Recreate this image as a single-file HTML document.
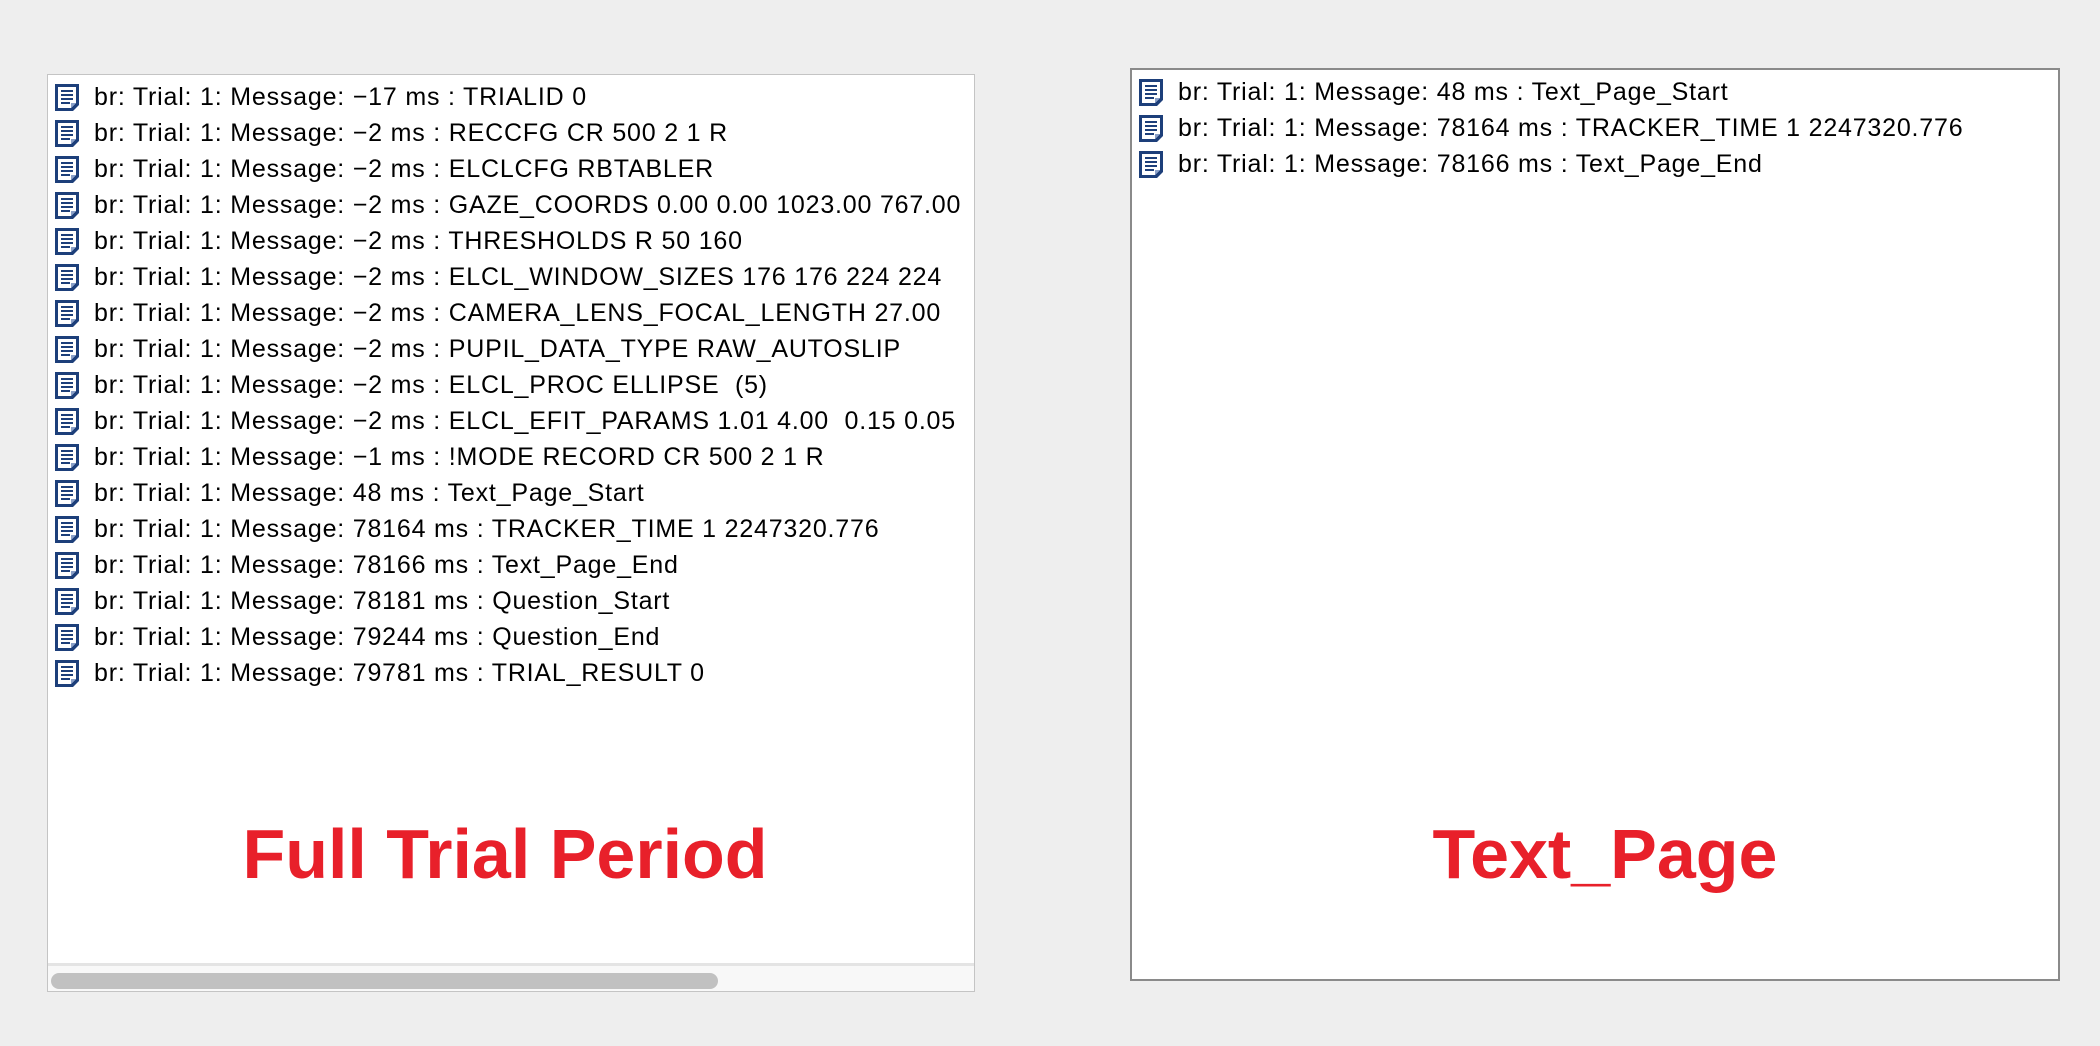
<!DOCTYPE html>
<html><head><meta charset="utf-8"><style>
body{margin:0;width:2100px;height:1046px;background:#eeeeee;position:relative;overflow:hidden;font-family:"Liberation Sans",sans-serif}
.panel{position:absolute;background:#fff;overflow:hidden}
#p1{left:47px;top:74px;width:926px;height:916px;border:1px solid #c4c4c4}
#p2{left:1130px;top:68px;width:926px;height:909px;border:2px solid #8a8a8a}
.row{position:absolute;left:6px;height:36px;white-space:nowrap;font-size:25px;letter-spacing:0.8px;line-height:36px;color:#000}
.row svg{position:absolute;left:0;top:4px}
.row span{position:absolute;left:40px;top:0}
.lbl{position:absolute;color:#e8202a;font-weight:bold;font-size:70px;transform:translateX(-50%);white-space:nowrap;top:814px}
.track{position:absolute;left:0;right:0;top:888px;height:28px;background:#f8f8f8;border-top:3px solid #e4e4e4}
.thumb{position:absolute;left:3px;top:7px;width:667px;height:16px;border-radius:8px;background:#c1c1c1}
</style></head><body>
<svg width="0" height="0" style="position:absolute"><defs><g id="ic"><path d="M1 1H25V22L19 28H1Z" fill="#1d3f7a"/><path d="M4 4H22V20L17 25H4Z" fill="#fff"/><path d="M7 8H19M7 12H19M7 16H19M7 20H16" stroke="#1d3f7a" stroke-width="2"/><path d="M17 25L22 20H17Z" fill="#8aa0c8"/></g></defs></svg>
<div class="panel" id="p1">
<div class="row" style="top:4px"><svg width="27" height="29"><use href="#ic"/></svg><span>br: Trial: 1: Message: −17 ms : TRIALID 0</span></div>
<div class="row" style="top:40px"><svg width="27" height="29"><use href="#ic"/></svg><span>br: Trial: 1: Message: −2 ms : RECCFG CR 500 2 1 R</span></div>
<div class="row" style="top:76px"><svg width="27" height="29"><use href="#ic"/></svg><span>br: Trial: 1: Message: −2 ms : ELCLCFG RBTABLER</span></div>
<div class="row" style="top:112px"><svg width="27" height="29"><use href="#ic"/></svg><span>br: Trial: 1: Message: −2 ms : GAZE_COORDS 0.00 0.00 1023.00 767.00</span></div>
<div class="row" style="top:148px"><svg width="27" height="29"><use href="#ic"/></svg><span>br: Trial: 1: Message: −2 ms : THRESHOLDS R 50 160</span></div>
<div class="row" style="top:184px"><svg width="27" height="29"><use href="#ic"/></svg><span>br: Trial: 1: Message: −2 ms : ELCL_WINDOW_SIZES 176 176 224 224</span></div>
<div class="row" style="top:220px"><svg width="27" height="29"><use href="#ic"/></svg><span>br: Trial: 1: Message: −2 ms : CAMERA_LENS_FOCAL_LENGTH 27.00</span></div>
<div class="row" style="top:256px"><svg width="27" height="29"><use href="#ic"/></svg><span>br: Trial: 1: Message: −2 ms : PUPIL_DATA_TYPE RAW_AUTOSLIP</span></div>
<div class="row" style="top:292px"><svg width="27" height="29"><use href="#ic"/></svg><span>br: Trial: 1: Message: −2 ms : ELCL_PROC ELLIPSE &nbsp;(5)</span></div>
<div class="row" style="top:328px"><svg width="27" height="29"><use href="#ic"/></svg><span>br: Trial: 1: Message: −2 ms : ELCL_EFIT_PARAMS 1.01 4.00 &nbsp;0.15 0.05</span></div>
<div class="row" style="top:364px"><svg width="27" height="29"><use href="#ic"/></svg><span>br: Trial: 1: Message: −1 ms : !MODE RECORD CR 500 2 1 R</span></div>
<div class="row" style="top:400px"><svg width="27" height="29"><use href="#ic"/></svg><span>br: Trial: 1: Message: 48 ms : Text_Page_Start</span></div>
<div class="row" style="top:436px"><svg width="27" height="29"><use href="#ic"/></svg><span>br: Trial: 1: Message: 78164 ms : TRACKER_TIME 1 2247320.776</span></div>
<div class="row" style="top:472px"><svg width="27" height="29"><use href="#ic"/></svg><span>br: Trial: 1: Message: 78166 ms : Text_Page_End</span></div>
<div class="row" style="top:508px"><svg width="27" height="29"><use href="#ic"/></svg><span>br: Trial: 1: Message: 78181 ms : Question_Start</span></div>
<div class="row" style="top:544px"><svg width="27" height="29"><use href="#ic"/></svg><span>br: Trial: 1: Message: 79244 ms : Question_End</span></div>
<div class="row" style="top:580px"><svg width="27" height="29"><use href="#ic"/></svg><span>br: Trial: 1: Message: 79781 ms : TRIAL_RESULT 0</span></div>
<div class="track"><div class="thumb"></div></div>
</div>
<div class="panel" id="p2">
<div class="row" style="top:4px"><svg width="27" height="29"><use href="#ic"/></svg><span>br: Trial: 1: Message: 48 ms : Text_Page_Start</span></div>
<div class="row" style="top:40px"><svg width="27" height="29"><use href="#ic"/></svg><span>br: Trial: 1: Message: 78164 ms : TRACKER_TIME 1 2247320.776</span></div>
<div class="row" style="top:76px"><svg width="27" height="29"><use href="#ic"/></svg><span>br: Trial: 1: Message: 78166 ms : Text_Page_End</span></div>
</div>
<div class="lbl" style="left:505px">Full Trial Period</div>
<div class="lbl" style="left:1605px">Text_Page</div>
</body></html>
